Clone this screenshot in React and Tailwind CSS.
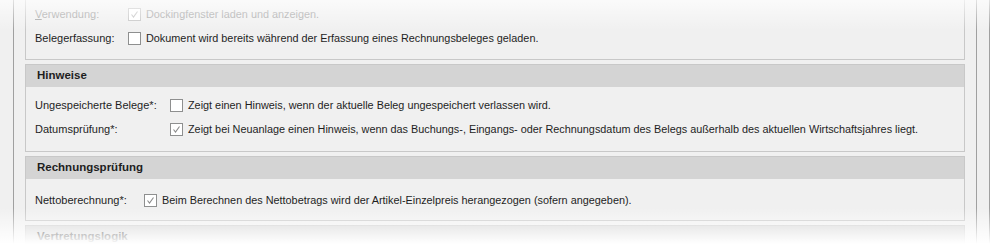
import React from 'react'

const Box = ({ checked, disabled }) => (
  <svg width="13" height="13" viewBox="0 0 13 13" className="shrink-0">
    <rect x="0.5" y="0.5" width="12" height="12" fill="#ffffff" stroke={disabled ? '#c4c4c4' : '#8e8f8f'} />
    {checked && (
      <polyline
        points="3.5,6.5 5.5,9 9.5,3.5"
        fill="none"
        stroke={disabled ? '#c0c0c0' : '#8a8a8a'}
        strokeWidth="1.1"
      />
    )}
  </svg>
)

const Row = ({ label, labelW, checked, disabled, children }) => (
  <div className="flex items-center h-[24px]">
    <div className={`shrink-0 ${labelW} ${disabled ? 'text-[#a3a3a3]' : ''}`}>{label}</div>
    <Box checked={checked} disabled={disabled} />
    <span className={`ml-[5px] whitespace-nowrap text-[10.85px] ${disabled ? 'text-[#a3a3a3]' : ''}`}>{children}</span>
  </div>
)

const Header = ({ children }) => (
  <div className="h-[22px] bg-[#d4d4d4] flex items-center pl-[11px] font-bold text-[11.5px]">{children}</div>
)

export default function App() {
  return (
    <div className="relative w-[990px] h-[244px] overflow-hidden bg-[#f0f0f0] text-[11px] text-[#1e1e1e] font-['Liberation_Sans',Arial,sans-serif]">
      <div className="flex h-full">
        <div className="w-[13px] shrink-0" />
        <div className="w-px shrink-0 bg-[#a0a0a0]" />
        <div className="w-[962px] shrink-0 px-[11px] flex flex-col gap-[4px]">
          {/* Allgemein (top cut off) */}
          <div className="border-x border-b border-[#c8c8c8] pt-[2px] pb-[9px] pl-[9px]">
            <Row label={<><span className="underline">V</span>erwendung:</>} labelW="w-[93px]" checked disabled>
              Dockingfenster laden und anzeigen.
            </Row>
            <Row label={<>Bele<span className="underline">g</span>erfassung:</>} labelW="w-[93px]">
              Dokument wird bereits während der Erfassung eines Rechnungsbeleges geladen.
            </Row>
          </div>

          {/* Hinweise */}
          <div className="border border-[#c8c8c8]">
            <Header>Hinweise</Header>
            <div className="pt-[6px] pb-[10px] pl-[9px]">
              <Row label="Ungespeicherte Belege*:" labelW="w-[135px]">
                Zeigt einen Hinweis, wenn der aktuelle Beleg ungespeichert verlassen wird.
              </Row>
              <Row label="Datumsprüfung*:" labelW="w-[135px]" checked>
                Zeigt bei Neuanlage einen Hinweis, wenn das Buchungs-, Eingangs- oder Rechnungsdatum des Belegs außerhalb des aktuellen Wirtschaftsjahres liegt.
              </Row>
            </div>
          </div>

          {/* Rechnungsprüfung */}
          <div className="border border-[#c8c8c8]">
            <Header>Rechnungsprüfung</Header>
            <div className="pt-[9px] pb-[8px] pl-[9px]">
              <Row label="Nettoberechnung*:" labelW="w-[109px]" checked>
                Beim Berechnen des Nettobetrags wird der Artikel-Einzelpreis herangezogen (sofern angegeben).
              </Row>
            </div>
          </div>

          {/* Vertretungslogik */}
          <div className="border border-[#c8c8c8]">
            <Header>Vertretungslogik</Header>
          </div>
        </div>
        <div className="w-px shrink-0 bg-[#a0a0a0]" />
        <div className="w-[12px] shrink-0" />
        <div className="w-px shrink-0 bg-[#a0a0a0]" />
      </div>

      {/* fade overlays */}
      <div className="absolute inset-x-0 top-0 h-[30px] bg-gradient-to-b from-white/70 to-transparent pointer-events-none" />
      <div className="absolute inset-x-0 bottom-0 h-[36px] bg-gradient-to-b from-transparent to-white pointer-events-none" />
    </div>
  )
}
